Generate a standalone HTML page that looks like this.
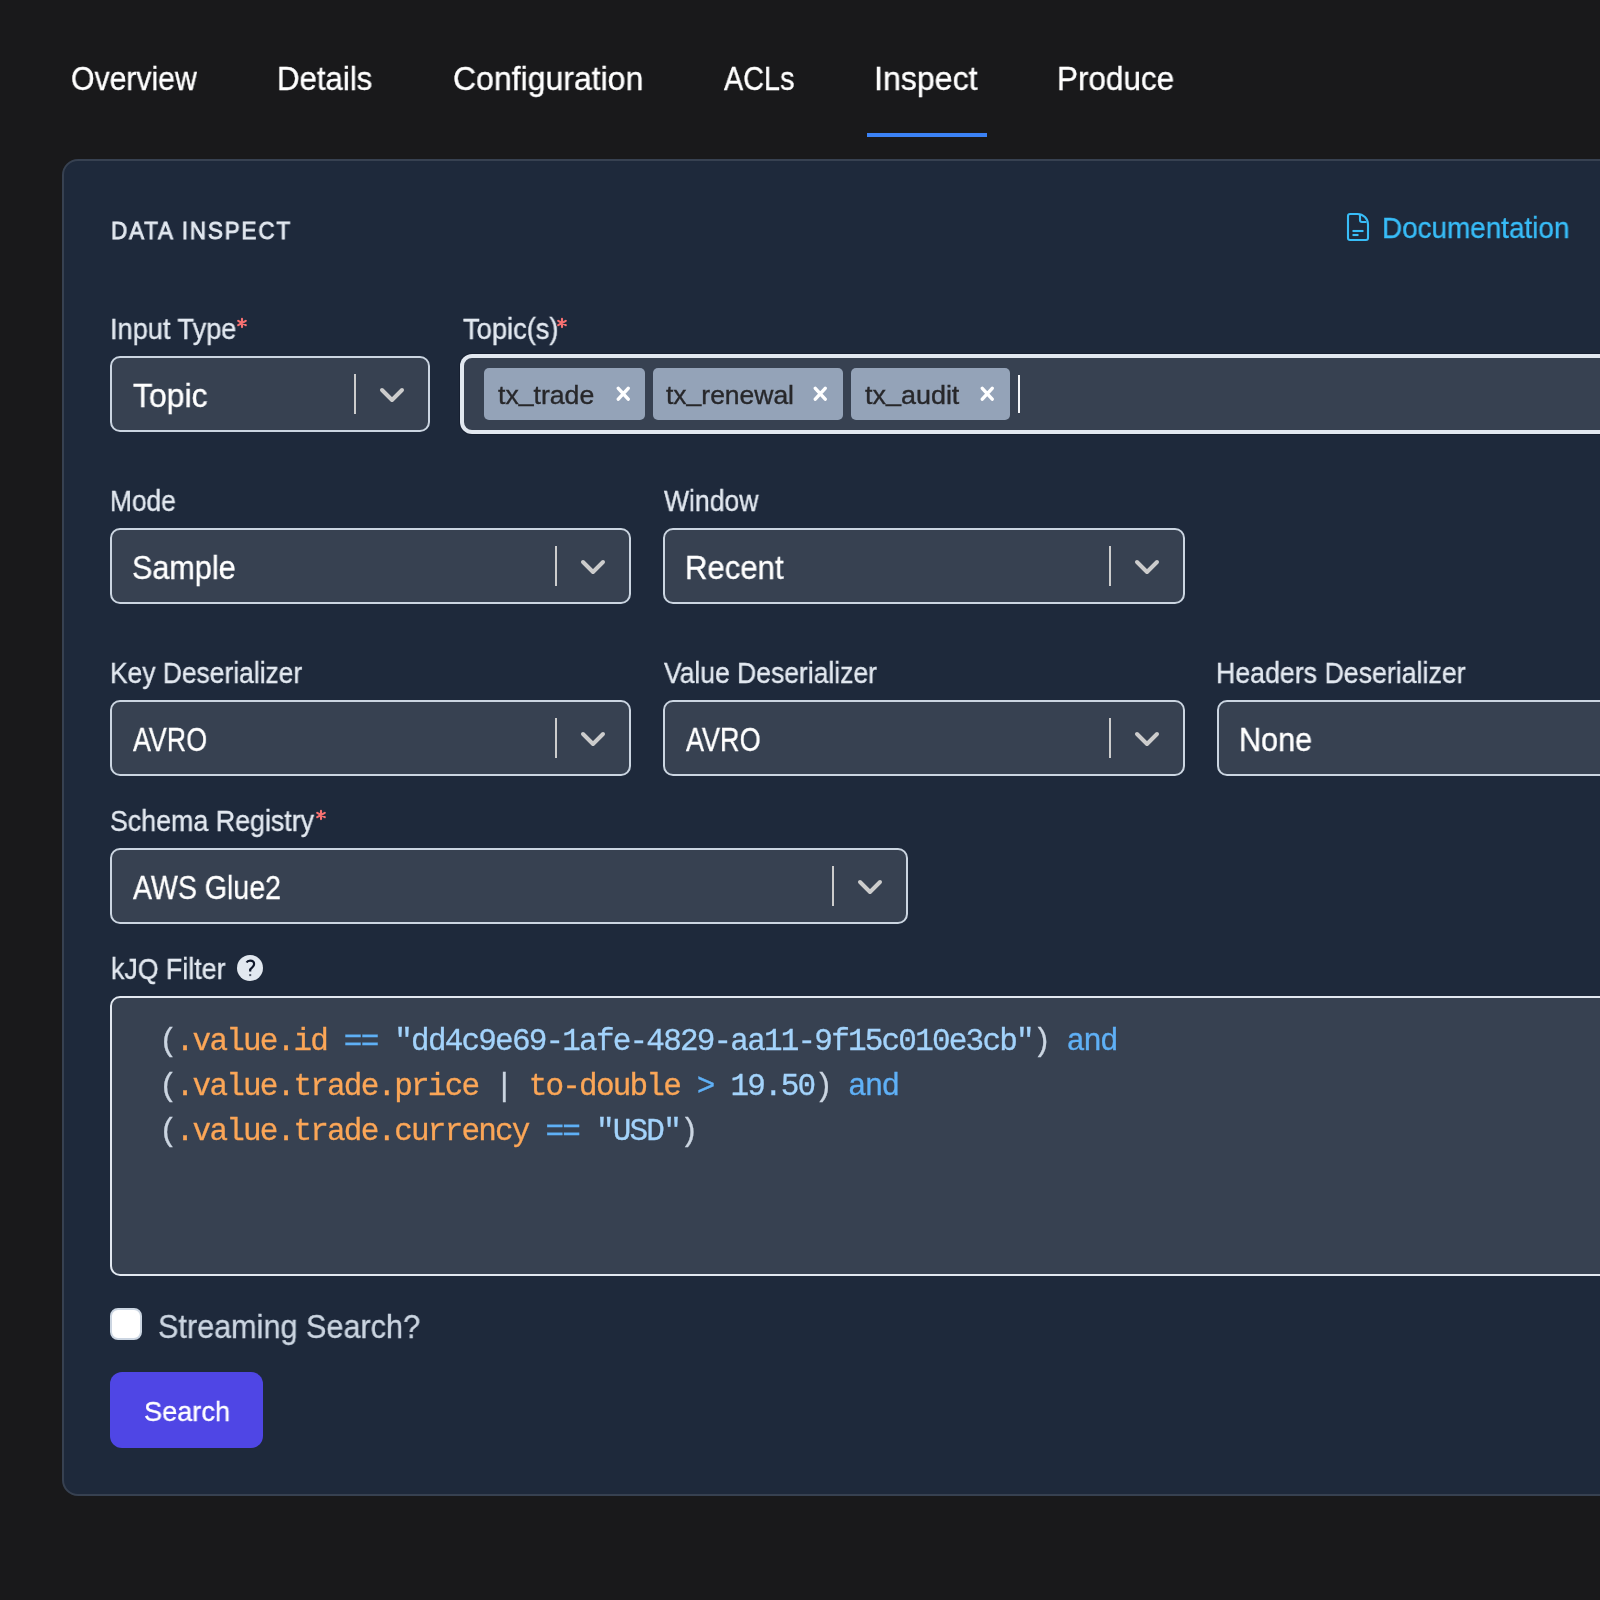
<!DOCTYPE html>
<html><head><meta charset="utf-8"><title>Data Inspect</title>
<style>
html,body{margin:0;padding:0;}
body{width:1600px;height:1600px;overflow:hidden;position:relative;background:#19191b;font-family:"Liberation Sans",sans-serif;}
.t{position:absolute;white-space:pre;transform-origin:0 0;font-family:"Liberation Sans",sans-serif;-webkit-text-stroke:0.35px currentColor;will-change:transform;}
.abs{position:absolute;box-sizing:border-box;}
.tabline{left:867px;top:133px;width:120px;height:4px;background:#3b82f6;}
.card{left:62px;top:159px;width:1700px;height:1337px;background:#1e293b;border:2px solid #374151;border-radius:16px;}
.inp{background:#374151;border:2px solid #cbd5e1;border-radius:10px;}
.sep{position:absolute;width:2px;height:40px;background:#cccccc;}
.chev{position:absolute;width:28px;height:18px;}
.chip{position:absolute;top:368px;height:52px;background:#94a3b8;border-radius:5px;}
.x{position:absolute;top:385.9px;width:15px;height:16px;}
.code{position:absolute;left:158.7px;font-family:"Liberation Mono",monospace;font-size:31px;letter-spacing:-1.8px;line-height:31px;white-space:pre;color:#cbd5e1;-webkit-text-stroke:0.3px currentColor;will-change:transform;}
.o{color:#fba657}.b{color:#5fb0f6}.s{color:#a3d3fb}
</style></head>
<body>
<nav>
<span class="t" style="left:70.59px;top:62.26px;font-size:33px;line-height:33px;color:#ffffff;transform:scaleX(0.9144)">Overview</span>
<span class="t" style="left:276.86px;top:62.26px;font-size:33px;line-height:33px;color:#ffffff;transform:scaleX(0.9454)">Details</span>
<span class="t" style="left:452.78px;top:62.26px;font-size:33px;line-height:33px;color:#ffffff;transform:scaleX(0.9694)">Configuration</span>
<span class="t" style="left:724.00px;top:62.26px;font-size:33px;line-height:33px;color:#ffffff;transform:scaleX(0.8729)">ACLs</span>
<span class="t" style="left:874.08px;top:62.26px;font-size:33px;line-height:33px;color:#ffffff;transform:scaleX(0.9736)">Inspect</span>
<span class="t" style="left:1057.09px;top:62.26px;font-size:33px;line-height:33px;color:#ffffff;transform:scaleX(0.9535)">Produce</span>
<div class="abs tabline"></div>
</nav>
<main>
<div class="abs card"></div>

<!-- Input Type select -->
<div class="abs inp" style="left:110px;top:356px;width:320px;height:76px;"></div>
<div class="sep" style="left:354px;top:374px;"></div>
<svg class="chev" style="left:378px;top:386px;" viewBox="0 0 28 18"><path d="M4 4 L14 14 L24 4" fill="none" stroke="#cccccc" stroke-width="4" stroke-linecap="round" stroke-linejoin="round"/></svg>

<!-- Topics multi input (focused) -->
<div class="abs inp" style="left:462px;top:356px;width:1300px;height:76px;border-color:#e2e8f0;box-shadow:0 0 0 2px #e2e8f0, 0 0 0 3px rgba(10,15,30,0.35);border-radius:10px;"></div>
<div class="chip" style="left:484px;width:161px;"></div>
<div class="chip" style="left:653px;width:190px;"></div>
<div class="chip" style="left:851px;width:159px;"></div>
<svg class="x" style="left:615.6px" viewBox="0 0 15 16"><path d="M2.3 2.3 L12.2 13.2 M12.2 2.3 L2.3 13.2" stroke="#fff" stroke-width="3.4" stroke-linecap="round"/></svg>
<svg class="x" style="left:813.4px" viewBox="0 0 15 16"><path d="M2.3 2.3 L12.2 13.2 M12.2 2.3 L2.3 13.2" stroke="#fff" stroke-width="3.4" stroke-linecap="round"/></svg>
<svg class="x" style="left:980.4px" viewBox="0 0 15 16"><path d="M2.3 2.3 L12.2 13.2 M12.2 2.3 L2.3 13.2" stroke="#fff" stroke-width="3.4" stroke-linecap="round"/></svg>
<div class="abs" style="left:1018px;top:375px;width:2px;height:38px;background:#f3f4f6;"></div>

<!-- Mode / Window -->
<div class="abs inp" style="left:110px;top:528px;width:521px;height:76px;"></div>
<div class="sep" style="left:555px;top:546px;"></div>
<svg class="chev" style="left:579px;top:558px;" viewBox="0 0 28 18"><path d="M4 4 L14 14 L24 4" fill="none" stroke="#cccccc" stroke-width="4" stroke-linecap="round" stroke-linejoin="round"/></svg>
<div class="abs inp" style="left:663px;top:528px;width:522px;height:76px;"></div>
<div class="sep" style="left:1109px;top:546px;"></div>
<svg class="chev" style="left:1133px;top:558px;" viewBox="0 0 28 18"><path d="M4 4 L14 14 L24 4" fill="none" stroke="#cccccc" stroke-width="4" stroke-linecap="round" stroke-linejoin="round"/></svg>

<!-- Deserializers -->
<div class="abs inp" style="left:110px;top:700px;width:521px;height:76px;"></div>
<div class="sep" style="left:555px;top:718px;"></div>
<svg class="chev" style="left:579px;top:730px;" viewBox="0 0 28 18"><path d="M4 4 L14 14 L24 4" fill="none" stroke="#cccccc" stroke-width="4" stroke-linecap="round" stroke-linejoin="round"/></svg>
<div class="abs inp" style="left:663px;top:700px;width:522px;height:76px;"></div>
<div class="sep" style="left:1109px;top:718px;"></div>
<svg class="chev" style="left:1133px;top:730px;" viewBox="0 0 28 18"><path d="M4 4 L14 14 L24 4" fill="none" stroke="#cccccc" stroke-width="4" stroke-linecap="round" stroke-linejoin="round"/></svg>
<div class="abs inp" style="left:1217px;top:700px;width:522px;height:76px;"></div>

<!-- Schema registry -->
<div class="abs inp" style="left:110px;top:848px;width:798px;height:76px;"></div>
<div class="sep" style="left:832px;top:866px;"></div>
<svg class="chev" style="left:856px;top:878px;" viewBox="0 0 28 18"><path d="M4 4 L14 14 L24 4" fill="none" stroke="#cccccc" stroke-width="4" stroke-linecap="round" stroke-linejoin="round"/></svg>

<!-- help icon -->
<svg class="abs" style="left:237px;top:955px;width:26px;height:26px;" viewBox="0 0 26 26"><circle cx="13" cy="13" r="13" fill="#e2e8f0"/><path d="M9.6 7.6 Q10.6 5.6 13.1 5.6 Q17.1 5.6 17.1 9.1 Q17.1 10.6 15.6 12 L13.2 14.5 V16.4" fill="none" stroke="#0f172a" stroke-width="2.2"/><rect x="12.2" y="19.1" width="2" height="2" fill="#0f172a" fill-opacity="0.7"/></svg>
<!-- kJQ textarea -->
<div class="abs" style="left:110px;top:996px;width:1600px;height:280px;background:#374151;border:2px solid #e2e8f0;border-radius:10px;"></div>
<div class="code" style="top:1026.2px;">(<span class="o">.value.id</span> <span class="b">==</span> <span class="s">"dd4c9e69-1afe-4829-aa11-9f15c010e3cb"</span>) <span class="b">and</span></div>
<div class="code" style="top:1071.2px;">(<span class="o">.value.trade.price</span> | <span class="o">to-double</span> <span class="b">&gt;</span> <span class="s">19.50</span>) <span class="b">and</span></div>
<div class="code" style="top:1116.2px;">(<span class="o">.value.trade.currency</span> <span class="b">==</span> <span class="s">"USD"</span>)</div>

<!-- checkbox -->
<div class="abs" style="left:110px;top:1308px;width:32px;height:32px;background:#ffffff;border:2px solid #cbd5e1;border-radius:8px;"></div>

<!-- search button -->
<div class="abs" style="left:110px;top:1372px;width:153px;height:76px;background:#4f46e5;border-radius:12px;"></div>

<!-- required markers -->
<svg class="abs" style="left:236.1px;top:316.75px;width:12px;height:12px;" viewBox="-6 -6 12 12"><path d="M0 -4.1 V4.1 M-3.8 -2.2 L3.8 2.2 M-3.8 2.2 L3.8 -2.2" stroke="#f87171" stroke-width="2.1" stroke-linecap="round"/></svg>
<svg class="abs" style="left:556px;top:316.75px;width:12px;height:12px;" viewBox="-6 -6 12 12"><path d="M0 -4.1 V4.1 M-3.8 -2.2 L3.8 2.2 M-3.8 2.2 L3.8 -2.2" stroke="#f87171" stroke-width="2.1" stroke-linecap="round"/></svg>
<svg class="abs" style="left:315px;top:808.75px;width:12px;height:12px;" viewBox="-6 -6 12 12"><path d="M0 -4.1 V4.1 M-3.8 -2.2 L3.8 2.2 M-3.8 2.2 L3.8 -2.2" stroke="#f87171" stroke-width="2.1" stroke-linecap="round"/></svg>

<!-- doc icon -->
<svg class="abs" style="left:1346px;top:212px;width:25px;height:31px;" viewBox="0 0 25 31"><g fill="none" stroke="#38bdf8" stroke-width="2.1" stroke-linejoin="round"><path d="M4 2 H11.5 A10.5 10.5 0 0 1 22 12.5 V26 Q22 28 20 28 H4 Q2 28 2 26 V4 Q2 2 4 2 Z"/><path d="M14 2.5 V8 Q14 10 16 10 H20.5"/><path d="M6.5 19 H17.5"/><path d="M6.5 23 H12.5"/></g></svg>

<span class="t" style="left:111.17px;top:218.76px;font-size:24.5px;line-height:24.5px;color:#e2e8f0;transform:scaleX(0.9167);letter-spacing:2px;-webkit-text-stroke:0.9px currentColor">DATA INSPECT</span>
<span class="t" style="left:1381.68px;top:213.95px;font-size:29px;line-height:29px;color:#38bdf8;transform:scaleX(0.9608)">Documentation</span>
<span class="t" style="left:109.63px;top:315.15px;font-size:29px;line-height:29px;color:#e2e8f0;transform:scaleX(0.9365)">Input Type</span>
<span class="t" style="left:463.00px;top:315.15px;font-size:29px;line-height:29px;color:#e2e8f0;transform:scaleX(0.9413)">Topic(s)</span>
<span class="t" style="left:109.69px;top:487.05px;font-size:29px;line-height:29px;color:#e2e8f0;transform:scaleX(0.9062)">Mode</span>
<span class="t" style="left:664.00px;top:487.15px;font-size:29px;line-height:29px;color:#e2e8f0;transform:scaleX(0.9155)">Window</span>
<span class="t" style="left:109.88px;top:658.95px;font-size:29px;line-height:29px;color:#e2e8f0;transform:scaleX(0.9104)">Key Deserializer</span>
<span class="t" style="left:664.00px;top:658.95px;font-size:29px;line-height:29px;color:#e2e8f0;transform:scaleX(0.9130)">Value Deserializer</span>
<span class="t" style="left:1216.26px;top:658.95px;font-size:29px;line-height:29px;color:#e2e8f0;transform:scaleX(0.9219)">Headers Deserializer</span>
<span class="t" style="left:109.88px;top:807.15px;font-size:29px;line-height:29px;color:#e2e8f0;transform:scaleX(0.9242)">Schema Registry</span>
<span class="t" style="left:110.58px;top:954.95px;font-size:29px;line-height:29px;color:#e2e8f0;transform:scaleX(0.9230)">kJQ Filter</span>
<span class="t" style="left:133.00px;top:379.16px;font-size:33px;line-height:33px;color:#ffffff;transform:scaleX(0.9682)">Topic</span>
<span class="t" style="left:131.97px;top:551.46px;font-size:33px;line-height:33px;color:#ffffff;transform:scaleX(0.9266)">Sample</span>
<span class="t" style="left:685.12px;top:550.86px;font-size:33px;line-height:33px;color:#ffffff;transform:scaleX(0.9415)">Recent</span>
<span class="t" style="left:132.90px;top:722.96px;font-size:33px;line-height:33px;color:#ffffff;transform:scaleX(0.8130)">AVRO</span>
<span class="t" style="left:686.00px;top:722.86px;font-size:33px;line-height:33px;color:#ffffff;transform:scaleX(0.8185)">AVRO</span>
<span class="t" style="left:1238.55px;top:723.06px;font-size:33px;line-height:33px;color:#ffffff;transform:scaleX(0.9267)">None</span>
<span class="t" style="left:132.90px;top:870.96px;font-size:33px;line-height:33px;color:#ffffff;transform:scaleX(0.8645)">AWS Glue2</span>
<span class="t" style="left:497.50px;top:382.81px;font-size:25.5px;line-height:25.5px;color:#27272a;transform:scaleX(1.0440)">tx<span style="position:relative;top:-3.5px">_</span>trade</span>
<span class="t" style="left:666.25px;top:382.81px;font-size:25.5px;line-height:25.5px;color:#27272a;transform:scaleX(1.0378)">tx<span style="position:relative;top:-3.5px">_</span>renewal</span>
<span class="t" style="left:864.50px;top:382.81px;font-size:25.5px;line-height:25.5px;color:#27272a;transform:scaleX(1.0563)">tx<span style="position:relative;top:-3.5px">_</span>audit</span>
<span class="t" style="left:158.07px;top:1309.86px;font-size:33px;line-height:33px;color:#cbd5e1;transform:scaleX(0.9277)">Streaming Search?</span>
<span class="t" style="left:143.63px;top:1398.09px;font-size:28px;line-height:28px;color:#ffffff;transform:scaleX(0.9693)">Search</span>
</main>
</body></html>
